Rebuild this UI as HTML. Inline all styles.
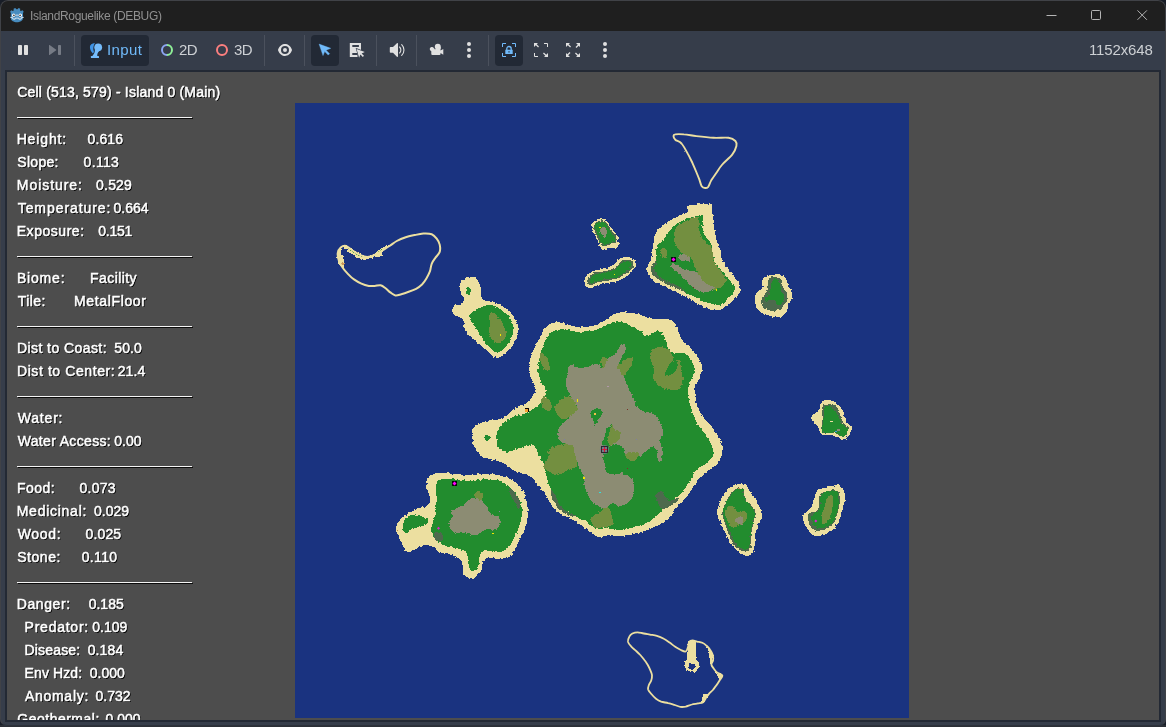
<!DOCTYPE html>
<html><head><meta charset="utf-8"><title>IslandRoguelike (DEBUG)</title>
<style>
*{box-sizing:border-box;margin:0;padding:0}
html,body{width:1166px;height:727px;overflow:hidden;background:#181d27;font-family:"Liberation Sans",sans-serif}
#win{position:absolute;left:0;top:0;width:1166px;height:726px;background:#363d4a;border-radius:8px 8px 7px 7px;overflow:hidden}
#win:after{content:"";box-sizing:border-box;position:absolute;left:0;top:0;width:1166px;height:726px;border:1px solid #404247;border-bottom-color:#2c313a;border-radius:8px 8px 7px 7px;pointer-events:none}
#title{position:absolute;left:0;top:0;width:1166px;height:31px;background:#1f1f1f}
#title .t{position:absolute;left:30.1px;top:9px;font-size:12px;line-height:15px;color:#909090;white-space:nowrap;letter-spacing:-0.34px;will-change:transform}
#tb{position:absolute;left:0;top:31px;width:1166px;height:40px;background:#363d4a}
.sep{position:absolute;top:35px;width:1px;height:31px;background:#4a505c}
.btn{position:absolute;top:35px;height:31px;background:#252b36;border-radius:4px}
.tx{position:absolute;top:41px;font-size:15px;line-height:18px;color:#cdd0d4;white-space:nowrap;will-change:transform}
svg{position:absolute;overflow:visible}
#frame{position:absolute;left:5px;top:70px;width:1156px;height:652px;background:#232934}
#game{position:absolute;left:7px;top:72px;width:1152px;height:648px;background:#4d4d4d;overflow:hidden}
#map{position:absolute;left:288px;top:31px;width:614px;height:615px;background:#1a3380;overflow:hidden}
.l{position:absolute;height:20px;font-size:14px;line-height:20px;color:#fff;white-space:pre;text-shadow:1px 1px 0 #000;-webkit-text-stroke:0.5px #fff}
#panel{position:absolute;left:0;top:0;width:280px;height:648px;will-change:transform}
.hr{position:absolute;left:10px;width:175px;height:1px;background:#f4f4f4;box-shadow:1px 1px 0 rgba(0,0,0,.85)}
</style></head><body>
<div id="bot" style="position:absolute;left:0;top:725px;width:1166px;height:2px;background:#2b2f36"></div>
<div id="win">
<div id="title"><span class="t">IslandRoguelike (DEBUG)</span>
<!--TITLEICONS-->
<svg style="left:0;top:0" width="1166" height="31" viewBox="0 0 1166 31">
<!-- godot icon -->
<g>
<path d="M15.200 8.100l1.300 1.100h.9l1.300-1.100 1.500.7-.1 1.600.8.600 1.600-.7 1.200 1.400-.7 1.300v5.200c0 2.400-3.200 4-6.100 4s-6.100-1.600-6.100-4V13l-.7-1.300 1.200-1.400 1.600.7.800-.6-.1-1.600z" fill="#478cbf"/>
<circle cx="13.700" cy="15.200" r="1.700" fill="#fff"/><circle cx="20.300" cy="15.200" r="1.700" fill="#fff"/>
<circle cx="13.900" cy="15.300" r="0.900" fill="#414042"/><circle cx="20.100" cy="15.300" r="0.900" fill="#414042"/>
<rect x="16.400" y="14.200" width="1.200" height="2.200" rx="0.600" fill="#dfe9f2"/>
<path d="M10.300 17.400h2.300l.2 1.600 2.300.2.100-1.100h3.600l.1 1.100 2.300-.2.200-1.600h2.300" fill="none" stroke="#e6eef5" stroke-width="0.900"/>
</g>
<!-- window buttons -->
<g stroke="#b5b5b5" stroke-width="1" fill="none">
<path d="M1046.500 15.500h10"/>
<rect x="1091.500" y="10.500" width="9" height="9" rx="1"/>
<path d="M1137.500 10.400l9.400 9.400M1146.900 10.400l-9.400 9.400"/>
</g>
</svg>
<!--/TITLEICONS-->
</div>
<div id="tb"></div>
<!--TOOLBAR-->
<svg style="left:0;top:0" width="1166" height="72" viewBox="0 0 1166 72">
<!-- pressed buttons -->
<rect x="81" y="35" width="68" height="31" rx="4" fill="#222935"/>
<rect x="311" y="35" width="28" height="31" rx="4" fill="#222935"/>
<rect x="495" y="35" width="28" height="31" rx="4" fill="#222935"/>
<!-- separators -->
<g fill="#4b515d"><rect x="74" y="35" width="1" height="31"/><rect x="264" y="35" width="1" height="31"/><rect x="304" y="35" width="1" height="31"/><rect x="376" y="35" width="1" height="31"/><rect x="416" y="35" width="1" height="31"/><rect x="488" y="35" width="1" height="31"/></g>
<!-- pause -->
<g fill="#e0e0e0"><rect x="18" y="45" width="4" height="10" rx="0.8"/><rect x="24" y="45" width="4" height="10" rx="0.8"/></g>
<!-- next frame (disabled) -->
<g fill="#767b85"><path d="M49 45.3v9.4a.4.4 0 0 0 .65.3l6.6-4.7a.4.4 0 0 0 0-.6l-6.6-4.7a.4.4 0 0 0-.65.3z"/><rect x="58" y="45" width="3" height="10" rx="0.7"/></g>
<!-- input icon -->
<path d="M94.900 42.900C92 43.300 89.900 44.800 89.900 47c0 2.300 1.200 4.700 3 6.500.7-.6 1-1.400 1-2.300-.5-.8-.7-1.700-.6-2.700.1-2.200.7-4 1.600-5.600z" fill="#3f94e6"/>
<circle cx="98.200" cy="47.300" r="3.900" fill="#75bcfb"/>
<path d="M94.800 49.500c.2 1.700-.2 3.200-.9 4.300-.5.800-1.100 1.600-1.800 2.400h5.200c-.2-2 .3-3.700 1.900-5.200z" fill="#75bcfb"/>
<rect x="90.900" y="56.100" width="8.100" height="1.900" rx="0.500" fill="#75bcfb"/>
<!-- 2D ring -->
<path d="M167 45a5 5 0 0 0 0 10" fill="none" stroke="#8da5f3" stroke-width="2"/>
<path d="M167 45a5 5 0 0 1 0 10" fill="none" stroke="#8eef97" stroke-width="2"/>
<!-- 3D ring -->
<circle cx="222" cy="50" r="5" fill="none" stroke="#fc7f7f" stroke-width="2"/>
<!-- eye -->
<path transform="translate(277 42)" fill="#e0e0e0" fill-rule="evenodd" d="M8 2C5.443 2 2.209 3.948 1.045 7.705a1 1 0 0 0 0 .55C2.163 12.110 5.500 14 8 14s5.836-1.890 6.955-5.705a1 1 0 0 0 0-.55C13.861 3.935 10.554 2 8 2zm0 2a4 4 0 0 1 0 8 4 4 0 0 1 0-8zm0 2a2 2 0 0 0 0 4 2 2 0 0 0 0-4z"/>
<!-- select arrow -->
<path d="M319.100 44.100l11.600 4.200-4.600 1.900 3.500 3.500-1.400 1.400-3.500-3.500-1.700 4z" fill="#70bafa" stroke="#70bafa" stroke-width="0.400" stroke-linejoin="round"/>
<!-- list select -->
<path d="M349.800 43h11.200v7.500h-3.500v6.500h-7.700z" fill="#e0e0e0"/>
<rect x="352.300" y="45" width="6.600" height="2" fill="#363d4a"/><rect x="352.300" y="53" width="5" height="2" fill="#363d4a"/>
<path d="M356.600 48.900l8.200 3.200-3.200 1.300 2.400 2.400-1.200 1.200-2.400-2.400-1.300 3.200z" fill="#e0e0e0" stroke="#363d4a" stroke-width="1.200" paint-order="stroke"/>
<!-- speaker -->
<g fill="#e0e0e0"><path d="M397.400 43c.4 0 .6.300.6.700v12.600c0 .6-.6.900-1.100.5l-3.900-4H390.600a.8.800 0 0 1-.8-.8v-4.200a.8.800 0 0 1 .8-.8H393l3.900-3.800c.2-.2.300-.2.500-.2z"/></g>
<path d="M399.600 47a4.200 4.200 0 0 1 0 6M401.700 44.600a7.600 7.600 0 0 1 0 10.800" fill="none" stroke="#e0e0e0" stroke-width="1.100" stroke-linecap="round"/>
<!-- camera -->
<path transform="translate(428 42)" fill="#e0e0e0" d="M9.800 1.800a3 3 0 0 0-3 3 3 3 0 0 0 .9 2.100 2.200 2.200 0 0 0-.8.700 2.200 2.200 0 0 0-1-1.400 2.200 2.200 0 0 0-4.200 .9 2.200 2.200 0 0 0 1.600 2.100V12a1 1 0 0 0 1 1h7.200a1 1 0 0 0 1-1v-.9l2.800 1.600V7l-2.800 1.600V7.400a3 3 0 0 0 .3-2.600 3 3 0 0 0-3-3z"/>
<!-- dots -->
<g fill="#e0e0e0"><circle cx="469" cy="44" r="2"/><circle cx="469" cy="50" r="2"/><circle cx="469" cy="56" r="2"/><circle cx="605" cy="44" r="2"/><circle cx="605" cy="50" r="2"/><circle cx="605" cy="56" r="2"/></g>
<!-- lock frame -->
<g fill="none" stroke="#70bafa" stroke-width="1"><path d="M502.500 47v-3.500h3.500M512 43.500h3.500v3.500M515.500 53v3.500h-3.500M506 56.500h-3.500v-3.500"/></g>
<path d="M506.800 50v-1.300a2.200 2.200 0 0 1 4.400 0v1.300" fill="none" stroke="#70bafa" stroke-width="1.300"/>
<path fill-rule="evenodd" d="M505.300 49.800h7.400v4.200h-7.400zM508.400 51.200v1.400h1.200v-1.400z" fill="#70bafa"/>
<!-- expand 1 -->
<g fill="#e0e0e0"><path d="M534 43h4l-1.300 1.300 2.300 2.300-.9.900-2.300-2.300-1.800 1.800z"/><path d="M548 57h-4l1.300-1.300-2.300-2.300.9-.9 2.300 2.300 1.800-1.800z"/></g>
<g fill="none" stroke="#e0e0e0" stroke-width="1"><path d="M544 43.500h3.500v3.500M534.500 53v3.500h3.500"/></g>
<!-- expand 2 -->
<g fill="#e0e0e0"><path d="M566 43h4l-1.300 1.300 2.300 2.300-.9.900-2.300-2.300-1.800 1.800z"/><path d="M580 57h-4l1.300-1.300-2.300-2.300.9-.9 2.300 2.300 1.800-1.800z"/><path d="M580 43v4l-1.300-1.300-2.300 2.300-.9-.9 2.300-2.300-1.800-1.800z"/><path d="M566 57v-4l1.300 1.300 2.300-2.300.9.900-2.300 2.300 1.800 1.800z"/></g>
</svg>
<div class="tx" style="left:106.700px;color:#70bafa;letter-spacing:0.4px" id="tInput">Input</div>
<div class="tx" style="left:178.500px;letter-spacing:-0.500px" id="t2d">2D</div>
<div class="tx" style="left:233.500px;letter-spacing:-0.500px" id="t3d">3D</div>
<div class="tx" style="left:1088.500px;letter-spacing:-0.150px" id="tres">1152x648</div>
<!--/TOOLBAR-->
<div id="frame"></div>
<div id="game">
<div id="map">
<!--MAP-->
<svg style="left:0;top:0" width="614" height="615" viewBox="295 103 614 615">
<defs><filter id="rg" x="-5%" y="-5%" width="110%" height="110%"><feTurbulence type="fractalNoise" baseFrequency="0.35" numOctaves="2" seed="7" result="n"/><feDisplacementMap in="SourceGraphic" in2="n" scale="3.2" xChannelSelector="R" yChannelSelector="G"/></filter><filter id="rg2" x="-5%" y="-5%" width="110%" height="110%"><feTurbulence type="fractalNoise" baseFrequency="0.3" numOctaves="1" seed="3" result="n"/><feDisplacementMap in="SourceGraphic" in2="n" scale="1.5" xChannelSelector="R" yChannelSelector="G"/></filter></defs>
<g filter="url(#rg)" shape-rendering="crispEdges">
<path d="M546.0 327.2C549.3 324.3 554.4 322.2 558.7 322.0C563.0 321.8 567.3 324.9 571.8 325.8C576.3 326.7 581.5 327.3 585.6 327.2C589.6 327.0 592.4 326.0 595.9 324.8C599.3 323.5 602.6 321.6 606.2 319.6C609.7 317.6 611.9 313.7 617.2 312.7C622.5 311.8 632.1 312.7 637.8 313.8C643.6 314.8 646.7 318.1 651.6 318.9C656.5 319.8 663.1 318.1 667.1 318.9C671.1 319.8 673.4 320.9 675.7 324.1C678.0 327.2 678.3 333.8 680.8 337.8C683.4 341.9 688.0 344.4 691.2 348.2C694.3 351.9 697.9 356.5 699.8 360.2C701.6 363.9 702.8 367.1 702.5 370.5C702.2 374.0 699.4 377.4 698.0 380.8C696.7 384.3 694.6 386.6 694.6 391.2C694.6 395.7 696.1 403.5 698.0 408.4C699.9 413.2 703.7 417.4 705.9 420.4C708.2 423.4 709.2 423.0 711.8 426.6C714.4 430.2 719.7 437.8 721.4 442.1C723.1 446.4 722.9 448.7 722.1 452.4C721.4 456.1 719.8 461.0 717.0 464.4C714.1 467.9 708.4 469.9 704.9 473.0C701.5 476.2 699.2 479.6 696.3 483.3C693.4 487.1 690.9 491.7 687.7 495.4C684.6 499.1 680.3 502.3 677.4 505.7C674.5 509.1 672.8 513.2 670.5 516.0C668.2 518.9 666.8 520.9 663.6 522.9C660.5 524.9 655.9 526.3 651.6 528.1C647.3 529.8 643.0 531.9 637.8 533.2C632.7 534.5 625.3 535.7 620.6 536.0C615.9 536.3 613.2 534.7 609.6 534.9C606.1 535.2 602.5 537.7 599.3 537.3C596.2 536.9 594.7 535.2 590.7 532.5C586.7 529.8 580.1 524.2 575.2 521.2C570.4 518.1 565.2 516.6 561.5 514.3C557.7 512.0 555.5 510.6 552.9 507.4C550.3 504.3 548.3 498.8 546.0 495.4C543.7 491.9 541.7 489.9 539.1 486.8C536.5 483.6 534.5 479.0 530.5 476.5C526.5 473.9 519.6 473.6 515.0 471.3C510.5 469.0 507.0 464.7 503.0 462.7C499.0 460.7 494.7 460.4 491.0 459.3C487.2 458.1 483.5 458.1 480.6 455.8C477.8 453.5 475.2 449.4 473.8 445.5C472.3 441.6 471.7 435.5 471.7 432.4C471.7 429.4 472.6 428.7 473.8 427.3C474.9 425.8 476.0 425.0 478.6 423.8C481.2 422.7 485.5 421.3 489.2 420.4C493.0 419.5 496.7 420.4 501.3 418.3C505.9 416.3 512.2 410.9 516.8 408.0C521.3 405.1 525.6 404.3 528.8 401.1C531.9 398.0 535.4 393.1 535.7 389.1C536.0 385.1 531.7 381.1 530.5 377.1C529.4 373.0 528.5 369.0 528.8 365.0C529.1 361.0 530.5 357.3 532.2 353.0C534.0 348.7 536.8 343.5 539.1 339.2C541.4 334.9 542.7 330.0 546.0 327.2Z" fill="#ecdfa0"/>
<path d="M551.2 332.3C554.0 330.0 557.5 329.0 561.5 328.9C565.5 328.8 570.1 331.4 575.2 331.6C580.4 331.9 587.8 331.4 592.4 330.6C597.0 329.9 598.6 328.7 602.8 327.2C606.9 325.6 611.9 321.3 617.2 321.3C622.5 321.4 629.5 325.2 634.4 327.5C639.3 329.8 642.4 334.5 646.4 335.1C650.5 335.7 655.3 330.2 658.5 331.0C661.6 331.7 663.3 336.1 665.4 339.6C667.4 343.0 667.4 349.3 670.5 351.6C673.7 353.9 680.5 351.3 684.3 353.3C688.0 355.3 691.2 360.5 692.9 363.6C694.6 366.8 695.0 369.4 694.6 372.2C694.2 375.1 691.6 377.7 690.5 380.8C689.3 384.0 687.6 386.6 687.7 391.2C687.8 395.7 689.5 402.9 691.2 408.4C692.8 413.8 695.5 420.1 697.3 423.8C699.2 427.6 700.7 428.2 702.5 430.7C704.3 433.2 706.5 434.7 708.4 438.6C710.2 442.5 714.1 449.8 713.5 454.1C712.9 458.4 707.8 461.8 704.9 464.4C702.0 467.0 698.9 466.7 696.3 469.6C693.7 472.4 692.0 477.6 689.4 481.6C686.9 485.6 684.3 489.9 680.8 493.7C677.4 497.4 672.2 500.8 668.8 504.0C665.4 507.1 663.3 509.7 660.2 512.6C657.0 515.4 653.6 518.9 649.9 521.2C646.2 523.5 642.7 524.9 637.8 526.3C633.0 527.8 625.6 529.4 620.6 529.8C615.7 530.1 612.0 528.7 607.9 528.4C603.8 528.1 599.6 529.3 595.9 528.1C592.1 526.9 589.6 523.5 585.6 521.2C581.5 518.9 575.8 516.6 571.8 514.3C567.8 512.0 564.3 510.3 561.5 507.4C558.6 504.6 556.6 500.5 554.6 497.1C552.6 493.7 550.9 490.5 549.4 486.8C548.0 483.1 546.9 478.5 546.0 474.7C545.1 471.0 545.4 467.6 544.3 464.4C543.1 461.3 540.8 459.0 539.1 455.8C537.4 452.7 536.8 446.9 534.0 445.5C531.1 444.1 526.2 446.2 521.9 447.2C517.6 448.3 511.9 451.4 508.2 451.7C504.4 452.0 501.4 450.5 499.6 448.9C497.7 447.3 497.1 445.2 496.8 442.1C496.5 438.9 495.7 434.0 497.8 430.0C500.0 426.1 505.3 421.1 509.9 418.3C514.5 415.5 520.5 415.5 525.4 413.2C530.2 410.9 535.7 408.0 539.1 404.6C542.6 401.1 545.7 396.5 546.0 392.5C546.3 388.5 542.2 384.2 540.8 380.5C539.5 376.8 538.3 374.2 538.1 370.2C537.9 366.2 538.8 361.0 539.8 356.4C540.8 351.8 542.4 346.7 544.3 342.7C546.2 338.6 548.3 334.6 551.2 332.3Z" fill="#238c2e"/>
<path d="M484.1 436.9C484.5 436.2 486.4 435.1 487.5 435.2C488.7 435.3 490.8 436.7 491.0 437.6C491.1 438.5 489.2 440.0 488.2 440.3C487.2 440.7 485.5 440.2 484.8 439.7C484.1 439.1 483.6 437.6 484.1 436.9Z" fill="#238c2e"/>
<path d="M551.2 490.2C551.4 489.4 553.0 491.1 554.6 493.7C556.1 496.2 558.1 502.5 560.4 505.7C562.7 508.9 565.6 510.9 568.4 512.6C571.1 514.3 577.0 515.6 577.0 516.0C577.0 516.5 571.4 516.5 568.4 515.3C565.3 514.2 561.3 511.9 558.7 509.1C556.1 506.4 554.1 502.0 552.9 498.8C551.6 495.7 550.9 491.1 551.2 490.2Z" fill="#4d6b4d"/>
<path d="M649.9 355.0C650.5 352.7 652.5 349.3 655.0 348.2C657.6 347.0 662.5 347.0 665.4 348.2C668.2 349.3 670.8 352.7 672.2 355.0C673.7 357.3 672.8 361.1 674.0 361.9C675.1 362.8 677.7 357.6 679.1 360.2C680.5 362.8 682.3 372.8 682.6 377.4C682.8 382.0 682.6 385.6 680.8 387.7C679.1 389.8 675.4 390.1 672.2 390.1C669.1 390.1 665.1 389.5 661.9 387.7C658.8 385.9 654.6 382.3 653.3 379.1C652.1 376.0 654.6 371.7 654.3 368.8C654.1 365.9 652.3 364.2 651.6 361.9C650.9 359.6 649.3 357.3 649.9 355.0Z" fill="#738f40"/>
<path d="M665.4 375.7C664.8 374.2 667.1 367.9 668.8 365.4C670.5 362.8 674.2 359.9 675.7 360.2C677.1 360.5 678.0 364.8 677.4 367.1C676.8 369.4 674.2 372.5 672.2 374.0C670.2 375.4 665.9 377.1 665.4 375.7Z" fill="#238c2e"/>
<path d="M549.4 448.9C551.6 446.8 557.7 445.7 561.5 444.8C565.2 444.0 569.5 441.9 571.8 443.8C574.1 445.6 574.4 452.1 575.2 455.8C576.1 459.5 578.1 463.8 577.0 466.1C575.8 468.4 571.5 468.1 568.4 469.6C565.2 471.0 561.8 474.7 558.0 474.7C554.3 474.7 548.3 471.3 546.0 469.6C543.7 467.9 543.9 466.4 544.3 464.4C544.7 462.4 547.5 460.1 548.4 457.5C549.3 455.0 547.3 451.1 549.4 448.9Z" fill="#738f40"/>
<path d="M590.7 517.7C591.9 515.7 596.4 514.3 599.3 512.6C602.2 510.9 605.6 506.0 607.9 507.4C610.2 508.9 612.8 518.0 613.1 521.2C613.4 524.3 612.2 525.2 609.6 526.3C607.1 527.5 600.5 528.3 597.6 528.1C594.7 527.8 593.6 526.3 592.4 524.6C591.3 522.9 589.6 519.7 590.7 517.7Z" fill="#738f40"/>
<path d="M655.0 495.4C655.6 493.3 660.2 491.0 661.9 491.3C663.6 491.5 663.9 495.6 665.4 497.1C666.8 498.6 668.2 500.5 670.5 500.5C672.8 500.5 678.3 496.8 679.1 497.1C680.0 497.4 678.3 500.3 675.7 502.3C673.1 504.3 666.5 508.9 663.6 509.1C660.8 509.4 659.9 506.3 658.5 504.0C657.0 501.7 654.5 497.5 655.0 495.4Z" fill="#4d6b4d"/>
<path d="M568.5 367.2C569.3 365.6 570.4 364.5 572.2 364.7C574.1 364.9 576.8 368.2 579.6 368.5C582.5 368.7 586.5 366.8 589.6 366.0C592.7 365.1 596.2 363.3 598.2 363.5C600.3 363.7 600.5 368.0 601.9 367.2C603.4 366.4 604.8 360.6 606.9 358.5C609.0 356.5 612.3 356.7 614.3 354.8C616.4 353.0 617.6 349.2 619.3 347.4C620.9 345.5 623.2 343.3 624.2 343.7C625.3 344.1 625.9 347.8 625.5 349.9C625.1 351.9 622.8 354.0 621.8 356.1C620.7 358.1 619.5 360.0 619.3 362.3C619.1 364.5 619.7 367.2 620.5 369.7C621.4 372.2 623.2 374.6 624.2 377.1C625.3 379.6 625.7 382.1 626.7 384.6C627.8 387.0 629.2 389.5 630.4 392.0C631.7 394.5 633.1 396.9 634.2 399.4C635.2 401.9 635.0 404.8 636.6 406.9C638.3 408.9 641.6 410.8 644.1 411.8C646.5 412.8 649.4 412.2 651.5 413.1C653.6 413.9 654.8 414.9 656.5 416.8C658.1 418.6 660.4 421.3 661.4 424.2C662.4 427.1 662.9 431.2 662.7 434.1C662.4 437.0 660.2 438.7 660.2 441.5C660.2 444.4 662.4 448.2 662.7 451.5C662.9 454.8 662.2 460.1 661.4 461.4C660.6 462.6 658.5 460.8 657.7 458.9C656.9 457.0 657.5 452.3 656.5 450.2C655.4 448.2 653.2 446.3 651.5 446.5C649.9 446.7 648.6 449.8 646.5 451.5C644.5 453.1 641.6 455.2 639.1 456.4C636.6 457.7 634.0 459.3 631.7 458.9C629.4 458.5 627.1 456.0 625.5 453.9C623.8 451.9 623.6 448.2 621.8 446.5C619.9 444.9 616.4 444.0 614.3 444.0C612.3 444.0 610.4 447.3 609.4 446.5C608.3 445.7 608.1 441.5 608.1 439.1C608.1 436.6 608.8 434.1 609.4 431.6C610.0 429.2 612.3 424.6 611.9 424.2C611.4 423.8 608.1 427.1 606.9 429.2C605.7 431.2 605.3 434.1 604.4 436.6C603.6 439.1 601.5 441.8 601.9 444.0C602.4 446.3 606.7 448.6 606.9 450.2C607.1 451.9 603.6 451.7 603.2 453.9C602.8 456.2 603.8 460.8 604.4 463.8C605.0 466.9 605.3 470.9 606.9 472.5C608.6 474.2 611.4 473.6 614.3 473.8C617.2 474.0 621.4 472.9 624.2 473.8C627.1 474.6 630.0 476.7 631.7 478.7C633.3 480.8 634.0 483.3 634.2 486.2C634.4 489.0 634.2 493.2 632.9 496.1C631.7 499.0 629.0 501.8 626.7 503.5C624.5 505.1 621.8 506.0 619.3 506.0C616.8 506.0 614.3 503.1 611.9 503.5C609.4 503.9 606.7 508.0 604.4 508.5C602.2 508.9 600.1 506.8 598.2 506.0C596.4 505.1 594.9 505.1 593.3 503.5C591.6 501.8 589.8 499.0 588.3 496.1C586.9 493.2 585.4 489.5 584.6 486.2C583.8 482.8 584.2 479.1 583.4 476.2C582.5 473.3 580.7 471.3 579.6 468.8C578.6 466.3 578.0 463.8 577.2 461.4C576.3 458.9 575.3 456.4 574.7 453.9C574.1 451.5 574.7 448.2 573.5 446.5C572.2 444.9 569.5 444.9 567.3 444.0C565.0 443.2 561.5 443.2 559.8 441.5C558.2 439.9 557.3 436.6 557.3 434.1C557.3 431.6 558.6 428.7 559.8 426.7C561.1 424.6 563.1 423.4 564.8 421.7C566.4 420.1 567.7 418.8 569.7 416.8C571.8 414.7 576.3 411.8 577.2 409.3C578.0 406.9 575.7 404.0 574.7 401.9C573.7 399.8 572.2 399.0 571.0 396.9C569.7 394.9 568.1 392.0 567.3 389.5C566.4 387.0 566.0 384.6 566.0 382.1C566.0 379.6 566.8 377.1 567.3 374.6C567.7 372.2 567.7 368.9 568.5 367.2Z" fill="#8c8c73"/>
<path d="M616.8 367.2C617.8 365.6 622.8 361.4 625.5 359.8C628.2 358.1 631.9 356.5 632.9 357.3C634.0 358.1 632.7 362.3 631.7 364.7C630.6 367.2 628.2 370.3 626.7 372.2C625.3 374.0 624.2 376.3 623.0 375.9C621.8 375.5 620.3 371.1 619.3 369.7C618.3 368.2 615.8 368.9 616.8 367.2Z" fill="#738f40"/>
<path d="M601.9 357.3C602.8 355.9 606.5 356.9 606.9 358.5C607.3 360.2 605.3 365.8 604.4 367.2C603.6 368.7 602.4 368.9 601.9 367.2C601.5 365.6 601.1 358.7 601.9 357.3Z" fill="#738f40"/>
<path d="M554.9 406.9C556.1 404.0 562.1 398.6 564.8 396.9C567.5 395.3 568.9 394.9 571.0 396.9C573.0 399.0 577.4 406.0 577.2 409.3C577.0 412.6 572.2 415.1 569.7 416.8C567.3 418.4 564.4 419.7 562.3 419.2C560.2 418.8 558.6 416.4 557.3 414.3C556.1 412.2 553.6 409.7 554.9 406.9Z" fill="#738f40"/>
<path d="M542.0 398.2C542.6 396.9 544.1 396.5 545.5 396.9C546.8 397.4 548.8 399.0 549.9 400.7C551.0 402.3 552.0 405.2 551.9 406.9C551.8 408.5 550.7 410.2 549.4 410.6C548.2 411.0 545.8 410.4 544.5 409.3C543.1 408.3 541.9 406.2 541.5 404.4C541.1 402.5 541.3 399.4 542.0 398.2Z" fill="#738f40"/>
<path d="M540.0 353.6C540.6 351.9 543.5 353.4 545.0 354.8C546.4 356.3 547.8 359.8 548.7 362.3C549.5 364.7 550.3 368.2 549.9 369.7C549.5 371.1 547.6 371.8 546.2 370.9C544.7 370.1 542.3 367.6 541.2 364.7C540.2 361.8 539.4 355.2 540.0 353.6Z" fill="#738f40"/>
<path d="M611.9 424.2C612.7 423.8 612.9 427.7 614.3 429.2C615.8 430.6 619.7 431.2 620.5 432.9C621.4 434.5 620.5 437.2 619.3 439.1C618.1 440.9 614.7 442.8 613.1 444.0C611.4 445.3 610.2 447.3 609.4 446.5C608.6 445.7 608.1 441.5 608.1 439.1C608.1 436.6 608.8 434.1 609.4 431.6C610.0 429.2 611.0 424.6 611.9 424.2Z" fill="#738f40"/>
<path d="M625.5 453.9C626.3 452.9 629.4 451.5 631.7 451.5C634.0 451.5 638.5 452.7 639.1 453.9C639.7 455.2 636.6 457.7 635.4 458.9C634.2 460.1 633.1 461.6 631.7 461.4C630.2 461.2 627.8 458.9 626.7 457.7C625.7 456.4 624.7 455.0 625.5 453.9Z" fill="#738f40"/>
<path d="M590.8 411.8C591.8 410.4 595.1 408.3 597.0 408.1C598.8 407.9 601.3 409.1 601.9 410.6C602.6 412.0 601.5 415.1 600.7 416.8C599.9 418.4 597.8 418.8 597.0 420.5C596.2 422.1 596.4 426.7 595.8 426.7C595.1 426.7 594.1 422.1 593.3 420.5C592.4 418.8 591.2 418.2 590.8 416.8C590.4 415.3 589.8 413.3 590.8 411.8Z" fill="#238c2e"/>
<path d="M687.7 206.1C689.1 204.8 693.1 204.9 696.0 204.6C698.8 204.2 702.3 204.1 704.8 204.0C707.4 203.9 710.1 202.7 711.3 204.0C712.6 205.3 711.8 208.9 712.2 212.0C712.6 215.0 713.2 218.6 713.7 222.3C714.2 226.0 714.4 230.4 715.2 234.1C715.9 237.8 717.1 241.5 718.1 244.5C719.1 247.4 720.4 249.2 721.1 251.9C721.7 254.6 721.0 258.0 722.0 260.7C723.0 263.4 724.9 265.4 727.0 268.1C729.1 270.8 732.2 273.8 734.4 277.0C736.6 280.2 739.8 284.1 740.3 287.3C740.8 290.5 739.1 293.5 737.3 296.2C735.6 298.9 732.4 301.5 730.0 303.6C727.5 305.7 725.0 307.5 722.6 308.6C720.1 309.8 717.6 310.4 715.2 310.4C712.7 310.4 710.2 309.5 707.8 308.6C705.3 307.7 703.1 306.6 700.4 305.1C697.7 303.6 694.5 301.4 691.5 299.8C688.6 298.1 685.5 296.8 682.7 295.3C679.8 293.8 677.2 292.2 674.4 290.9C671.5 289.6 668.5 288.7 665.5 287.3C662.6 286.0 659.2 284.5 656.7 282.9C654.1 281.3 652.0 279.5 650.4 277.6C648.9 275.7 647.6 273.3 647.2 271.4C646.7 269.4 647.1 268.0 647.8 265.8C648.5 263.5 650.5 260.6 651.3 257.8C652.1 255.0 652.1 251.9 652.5 248.9C653.0 246.0 653.6 242.3 654.0 240.0C654.3 237.8 653.7 237.6 654.6 235.6C655.4 233.6 657.3 230.2 659.0 228.2C660.7 226.3 662.7 225.3 664.9 223.8C667.1 222.3 669.6 220.8 672.3 219.4C675.0 217.9 678.6 216.2 681.2 214.9C683.7 213.7 686.6 213.4 687.7 212.0C688.8 210.5 686.3 207.3 687.7 206.1Z" fill="#ecdfa0"/>
<path d="M698.9 215.8C701.6 215.4 702.8 214.3 703.3 216.4C703.9 218.5 702.0 224.8 702.5 228.2C703.0 231.7 704.7 234.1 706.3 237.1C707.9 240.0 711.0 242.5 712.2 246.0C713.4 249.4 712.7 254.3 713.7 257.8C714.7 261.2 716.2 263.7 718.1 266.7C720.1 269.6 722.8 272.3 725.5 275.5C728.2 278.7 733.2 282.9 734.4 285.9C735.6 288.8 734.4 290.8 732.9 293.3C731.4 295.7 727.7 298.7 725.5 300.6C723.3 302.6 722.1 304.6 719.6 305.1C717.1 305.6 713.1 304.0 710.7 303.6C708.4 303.2 708.3 303.5 705.7 302.4C703.1 301.3 698.5 298.7 695.1 297.1C691.7 295.5 688.2 294.0 685.3 292.7C682.5 291.3 680.5 290.3 677.9 289.1C675.4 287.9 672.8 286.9 670.0 285.6C667.1 284.2 663.4 282.5 661.1 281.1C658.7 279.8 657.3 279.1 655.8 277.6C654.2 276.1 652.4 274.1 651.6 272.3C650.9 270.4 650.6 268.6 651.3 266.7C652.1 264.7 655.3 262.7 656.1 260.4C656.8 258.2 655.8 255.9 656.1 253.3C656.3 250.8 656.3 247.6 657.5 245.4C658.8 243.2 661.5 242.4 663.4 240.0C665.4 237.7 667.1 233.9 669.4 231.2C671.6 228.5 673.8 225.9 676.7 223.8C679.7 221.7 683.4 220.1 687.1 218.8C690.8 217.4 696.2 216.2 698.9 215.8Z" fill="#238c2e"/>
<path d="M678.2 225.3C680.8 223.3 686.7 220.7 690.0 219.4C693.4 218.0 696.8 215.5 698.3 217.0C699.8 218.5 698.3 224.9 698.9 228.2C699.5 231.6 700.6 234.9 701.9 237.1C703.1 239.3 704.6 239.6 706.3 241.5C708.0 243.5 711.0 246.0 712.2 248.9C713.4 251.9 712.7 256.1 713.7 259.3C714.7 262.5 716.4 265.4 718.1 268.1C719.9 270.8 722.8 273.3 724.0 275.5C725.3 277.7 726.0 279.5 725.5 281.4C725.0 283.4 723.1 285.9 721.1 287.3C719.1 288.8 716.4 290.8 713.7 290.3C711.0 289.8 707.3 286.8 704.8 284.4C702.4 281.9 700.6 278.5 698.9 275.5C697.2 272.6 695.7 269.6 694.5 266.7C693.3 263.7 693.3 259.8 691.5 257.8C689.8 255.8 686.4 256.3 684.1 254.8C681.9 253.3 680.0 251.4 678.2 248.9C676.5 246.5 674.4 243.0 673.8 240.0C673.2 237.1 673.9 233.6 674.7 231.2C675.4 228.7 675.7 227.2 678.2 225.3Z" fill="#738f40"/>
<path d="M670.8 263.7C671.6 263.2 674.5 264.2 676.7 265.2C679.0 266.2 681.4 268.6 684.1 269.6C686.8 270.6 690.5 270.3 693.0 271.1C695.5 271.8 697.4 272.6 698.9 274.0C700.4 275.5 700.4 278.2 701.9 280.0C703.3 281.7 705.8 283.2 707.8 284.4C709.8 285.6 713.0 286.3 713.7 287.3C714.4 288.4 713.7 290.1 712.2 290.9C710.7 291.6 707.5 291.9 704.8 291.8C702.1 291.7 698.4 291.5 696.0 290.3C693.5 289.1 692.0 286.4 690.0 284.4C688.1 282.4 686.1 280.4 684.1 278.5C682.2 276.5 680.2 274.3 678.2 272.6C676.3 270.8 673.5 269.6 672.3 268.1C671.1 266.7 670.1 264.2 670.8 263.7Z" fill="#8c8c73"/>
<path d="M678.2 256.3C678.7 255.3 682.2 254.7 684.1 254.8C686.1 255.0 689.3 256.2 690.0 257.2C690.8 258.2 690.0 260.1 688.6 260.7C687.1 261.3 682.9 261.5 681.2 260.7C679.5 260.0 677.7 257.3 678.2 256.3Z" fill="#8c8c73"/>
<path d="M660.5 250.4C660.8 248.8 663.0 247.2 664.0 247.4C665.1 247.7 666.7 250.1 667.0 251.9C667.3 253.6 666.7 256.9 665.8 257.8C665.0 258.7 662.9 258.4 662.0 257.2C661.1 256.0 660.1 252.0 660.5 250.4Z" fill="#738f40"/>
<path d="M656.1 259.9C655.2 260.7 652.1 264.6 651.3 266.7C650.6 268.7 650.9 270.4 651.6 272.3C652.4 274.1 654.2 276.1 655.8 277.6C657.3 279.1 658.7 279.8 661.1 281.1C663.4 282.5 667.1 284.2 670.0 285.6C672.8 286.9 675.4 287.9 677.9 289.1C680.5 290.3 684.2 292.4 685.3 292.7C686.4 292.9 685.5 291.6 684.4 290.6C683.3 289.6 681.1 287.7 678.8 286.5C676.6 285.2 673.5 284.1 670.8 282.9C668.2 281.7 665.2 280.5 662.9 279.1C660.5 277.6 658.4 275.8 656.9 274.0C655.5 272.3 654.3 270.8 654.3 268.7C654.2 266.7 656.4 263.1 656.7 261.6C656.9 260.1 656.9 259.0 656.1 259.9Z" fill="#4d6b4d"/>
<path d="M591.3 226.5C591.4 224.6 592.5 222.5 594.3 221.1C596.1 219.8 600.0 218.4 602.0 218.2C604.0 218.0 604.9 218.4 606.4 220.0C607.9 221.5 609.7 225.4 611.1 227.6C612.6 229.9 614.1 231.5 615.3 233.3C616.5 235.0 617.8 235.6 618.2 238.0C618.6 240.3 619.0 245.8 617.6 247.4C616.3 249.1 612.5 247.7 610.0 248.0C607.4 248.3 604.3 249.5 602.6 249.2C600.8 248.9 600.5 247.9 599.6 246.3C598.7 244.6 598.2 241.5 597.2 239.2C596.3 236.8 594.7 234.2 593.7 232.1C592.7 230.0 591.2 228.3 591.3 226.5Z" fill="#ecdfa0"/>
<path d="M593.7 227.6C593.8 226.3 594.7 224.6 596.1 223.5C597.4 222.4 600.3 221.2 602.0 221.1C603.6 221.0 604.5 221.5 605.8 222.9C607.1 224.3 608.6 227.4 610.0 229.4C611.3 231.4 613.1 233.4 614.1 235.0C615.1 236.7 616.0 237.9 615.9 239.2C615.8 240.4 614.9 241.8 613.5 242.7C612.1 243.6 609.3 244.0 607.6 244.5C605.9 245.0 604.4 246.0 603.2 245.7C601.9 245.4 601.0 244.2 600.2 242.7C599.4 241.2 599.2 238.7 598.4 236.8C597.6 234.9 596.3 233.0 595.5 231.5C594.7 230.0 593.6 229.0 593.7 227.6Z" fill="#238c2e" stroke="#4d6b4d" stroke-width="1.4"/>
<path d="M600.2 228.8C600.7 228.0 602.7 226.9 603.7 227.0C604.8 227.1 605.9 228.4 606.4 229.4C606.9 230.4 607.1 232.1 607.0 233.3C606.9 234.4 606.3 235.4 605.8 236.2C605.4 237.0 604.9 238.2 604.3 238.0C603.8 237.8 603.2 236.0 602.6 235.0C601.9 234.0 600.9 233.1 600.5 232.1C600.1 231.0 599.7 229.7 600.2 228.8Z" fill="#8c8c73"/>
<path d="M584.2 281.4C584.2 279.5 585.2 277.2 586.6 275.5C588.0 273.8 590.0 272.2 592.5 271.1C595.0 270.0 598.4 269.8 601.4 269.0C604.3 268.3 607.8 267.8 610.2 266.7C612.7 265.5 614.4 263.6 616.2 262.2C617.9 260.8 618.6 259.2 620.6 258.4C622.6 257.5 625.8 257.0 628.0 257.2C630.2 257.3 632.5 258.2 633.9 259.3C635.3 260.3 636.3 262.0 636.3 263.7C636.3 265.4 635.0 267.9 633.9 269.6C632.8 271.3 631.2 272.6 629.5 274.0C627.7 275.5 625.8 277.2 623.5 278.5C621.3 279.7 618.9 280.7 616.2 281.4C613.4 282.2 610.0 282.4 607.3 282.9C604.6 283.4 602.4 283.6 599.9 284.4C597.4 285.1 594.7 286.8 592.5 287.3C590.3 287.8 588.0 288.3 586.6 287.3C585.2 286.4 584.2 283.4 584.2 281.4Z" fill="#ecdfa0"/>
<path d="M588.1 280.8C588.1 279.5 589.6 277.4 591.0 276.1C592.5 274.8 594.7 273.8 596.9 273.2C599.2 272.5 601.6 272.6 604.3 272.0C607.0 271.4 610.7 270.9 613.2 269.6C615.7 268.3 617.4 265.7 619.1 264.3C620.8 262.9 621.8 261.9 623.5 261.3C625.3 260.7 628.0 260.2 629.5 260.7C630.9 261.2 632.3 262.9 632.4 264.3C632.6 265.7 631.5 267.5 630.3 269.0C629.2 270.5 627.5 271.8 625.6 273.2C623.7 274.5 621.4 276.0 619.1 277.0C616.8 278.0 614.3 278.5 611.7 279.1C609.2 279.6 606.2 279.8 603.7 280.2C601.3 280.7 599.1 281.3 596.9 282.0C594.8 282.7 592.5 284.6 591.0 284.4C589.6 284.2 588.1 282.2 588.1 280.8Z" fill="#238c2e" stroke="#4d6b4d" stroke-width="1.6"/>
<path d="M459.5 285.9C459.7 283.7 461.1 281.5 462.5 280.0C463.8 278.5 465.8 277.6 467.8 277.1C469.8 276.6 472.4 276.3 474.3 277.1C476.2 277.8 477.9 279.5 479.0 281.5C480.1 283.5 480.7 286.4 481.1 288.9C481.4 291.4 480.3 294.3 481.1 296.3C481.8 298.3 483.3 299.7 485.5 300.7C487.7 301.7 491.4 301.2 494.4 302.2C497.3 303.2 500.5 304.9 503.3 306.6C506.0 308.3 508.6 310.3 510.6 312.5C512.7 314.8 514.3 317.2 515.7 319.9C517.0 322.6 518.5 325.8 518.6 328.8C518.8 331.7 517.6 334.7 516.6 337.7C515.5 340.6 513.8 343.9 512.1 346.5C510.4 349.1 508.4 351.5 506.2 353.3C504.0 355.1 501.0 357.0 498.8 357.5C496.6 358.0 494.7 357.3 492.9 356.3C491.1 355.3 489.7 353.2 487.9 351.6C486.1 349.9 484.1 348.3 482.0 346.5C479.9 344.7 477.5 342.6 475.2 340.6C472.8 338.6 469.6 336.9 467.8 334.7C466.0 332.5 465.0 329.8 464.2 327.3C463.5 324.9 464.2 321.7 463.3 319.9C462.5 318.2 460.5 318.0 458.9 317.0C457.3 316.0 454.7 315.3 453.6 314.0C452.5 312.7 452.0 310.5 452.4 309.0C452.8 307.5 454.4 306.0 456.0 305.1C457.5 304.3 460.5 304.7 461.9 303.7C463.3 302.7 464.3 301.0 464.2 299.2C464.1 297.5 462.1 295.5 461.3 293.3C460.5 291.1 459.3 288.2 459.5 285.9Z" fill="#ecdfa0"/>
<path d="M469.3 315.5C469.5 313.5 471.7 312.4 473.7 311.1C475.7 309.7 478.4 308.2 481.1 307.2C483.8 306.2 487.2 305.1 490.0 305.1C492.7 305.1 494.9 306.0 497.3 307.2C499.8 308.4 502.5 310.6 504.7 312.5C506.9 314.5 509.2 316.6 510.6 319.0C512.1 321.5 513.3 324.5 513.6 327.3C513.8 330.2 513.1 333.3 512.1 336.2C511.1 339.0 509.4 342.1 507.7 344.5C506.0 346.8 503.7 349.0 501.8 350.4C499.8 351.7 497.7 352.7 495.9 352.4C494.0 352.1 492.6 350.2 490.8 348.6C489.1 347.0 487.1 344.8 485.5 342.7C483.9 340.6 482.6 338.5 481.1 336.2C479.6 333.9 478.1 331.0 476.7 328.8C475.2 326.6 473.4 325.1 472.2 322.9C471.0 320.7 469.0 317.5 469.3 315.5Z" fill="#238c2e"/>
<path d="M489.1 315.5C489.6 313.5 491.5 312.3 492.9 312.5C494.3 312.8 495.9 315.5 497.3 317.0C498.8 318.4 500.5 319.4 501.8 321.4C503.0 323.4 504.0 326.3 504.7 328.8C505.5 331.3 506.7 334.0 506.2 336.2C505.7 338.4 503.5 341.0 501.8 342.1C500.0 343.2 497.6 343.3 495.9 342.7C494.1 342.1 492.6 340.4 491.4 338.5C490.3 336.7 489.3 334.1 489.1 331.7C488.8 329.4 490.0 327.1 490.0 324.4C490.0 321.7 488.6 317.5 489.1 315.5Z" fill="#738f40"/>
<path d="M465.7 288.3C466.2 287.5 468.4 286.9 469.3 287.4C470.1 287.9 470.9 290.0 470.7 291.3C470.6 292.5 469.1 294.6 468.4 294.8C467.6 295.0 466.7 293.5 466.3 292.4C465.9 291.4 465.2 289.1 465.7 288.3Z" fill="#238c2e"/>
<path d="M427.3 478.1C428.6 476.1 431.7 474.5 434.7 473.6C437.6 472.8 441.3 473.0 445.0 473.1C448.7 473.2 452.9 473.9 456.8 474.2C460.8 474.6 464.7 475.1 468.7 475.1C472.6 475.1 476.6 474.4 480.5 474.2C484.4 474.1 488.6 473.9 492.3 474.2C496.0 474.5 499.5 475.1 502.7 476.0C505.9 476.9 508.8 478.0 511.5 479.6C514.2 481.1 516.8 483.0 518.9 485.5C521.0 487.9 522.9 491.1 524.2 494.3C525.6 497.5 526.6 501.2 527.2 504.7C527.8 508.1 527.9 511.6 527.8 515.0C527.6 518.5 527.3 521.9 526.3 525.4C525.3 528.8 523.3 532.5 521.9 535.7C520.4 538.9 518.9 541.6 517.4 544.6C516.0 547.5 514.7 551.2 513.0 553.4C511.3 555.7 509.6 557.0 507.1 557.9C504.6 558.8 501.2 558.8 498.2 558.8C495.3 558.8 491.8 557.5 489.4 557.9C486.9 558.2 484.7 559.1 483.4 560.8C482.2 562.6 482.7 566.0 482.0 568.2C481.2 570.4 480.5 572.6 479.0 574.1C477.5 575.7 475.1 577.2 473.1 577.7C471.1 578.2 468.8 577.9 467.2 577.1C465.6 576.3 464.1 574.6 463.3 572.7C462.6 570.7 463.3 567.5 462.8 565.3C462.2 563.1 461.3 560.9 459.8 559.4C458.3 557.8 456.1 556.8 453.9 555.8C451.7 554.8 449.0 554.1 446.5 553.4C444.0 552.8 441.1 553.0 439.1 552.0C437.1 551.0 436.7 548.7 434.7 547.5C432.7 546.4 429.8 545.3 427.3 545.2C424.8 545.1 422.4 546.1 419.9 546.9C417.4 547.8 414.7 549.7 412.5 550.5C410.3 551.3 408.2 552.7 406.6 552.0C405.0 551.2 404.1 548.3 403.1 546.1C402.0 543.8 401.2 541.1 400.1 538.7C399.0 536.2 396.7 533.7 396.3 531.3C395.8 528.8 396.3 526.0 397.1 523.9C398.0 521.8 399.5 520.3 401.3 518.6C403.1 516.8 405.5 515.1 408.1 513.5C410.7 512.0 414.0 510.3 416.9 509.1C419.9 507.9 423.6 507.4 425.8 506.2C428.0 504.9 429.8 503.7 430.2 501.7C430.7 499.8 429.4 497.0 428.8 494.3C428.2 491.6 426.9 488.2 426.7 485.5C426.5 482.8 426.0 480.0 427.3 478.1Z" fill="#ecdfa0"/>
<path d="M437.6 481.0C439.4 479.2 443.3 479.2 446.5 479.0C449.7 478.7 453.2 479.2 456.8 479.6C460.5 479.9 464.7 481.0 468.7 481.0C472.6 481.0 476.6 479.8 480.5 479.6C484.4 479.3 488.9 479.2 492.3 479.6C495.8 480.0 498.5 480.8 501.2 481.9C503.9 483.0 506.2 484.2 508.6 486.1C510.9 487.9 513.4 490.2 515.4 492.9C517.3 495.5 519.3 498.5 520.4 501.7C521.5 504.9 521.9 508.6 521.9 512.1C521.9 515.5 521.3 519.0 520.4 522.4C519.5 525.9 517.9 529.6 516.6 532.8C515.2 536.0 514.0 538.9 512.4 541.6C510.8 544.3 509.2 547.3 507.1 549.0C505.0 550.7 502.4 551.6 499.7 552.0C497.0 552.3 493.4 551.3 490.8 551.1C488.2 550.8 485.9 549.9 484.0 550.5C482.2 551.1 480.7 553.0 479.9 554.9C479.1 556.9 479.5 560.1 479.0 562.3C478.5 564.5 478.1 566.7 476.9 568.2C475.8 569.7 473.6 571.4 472.2 571.2C470.8 570.9 469.4 568.7 468.7 566.7C468.0 564.8 468.5 561.8 468.1 559.4C467.7 556.9 467.7 553.7 466.3 552.0C464.9 550.2 462.1 549.8 459.8 549.0C457.5 548.3 454.9 548.0 452.4 547.5C450.0 547.0 447.2 546.9 445.0 546.1C442.8 545.2 441.0 543.7 439.1 542.2C437.2 540.7 435.2 539.0 433.8 537.2C432.4 535.4 431.0 533.5 430.8 531.3C430.6 529.1 432.0 526.4 432.6 523.9C433.3 521.4 434.2 519.2 434.7 516.5C435.2 513.8 435.2 510.6 435.6 507.6C435.9 504.7 436.7 501.7 436.7 498.8C436.8 495.8 436.0 492.9 436.2 489.9C436.3 486.9 435.9 482.9 437.6 481.0Z" fill="#238c2e"/>
<path d="M450.9 510.6C451.8 509.1 455.2 508.6 457.4 507.6C459.7 506.7 462.4 505.9 464.2 504.7C466.1 503.4 466.9 501.5 468.7 500.2C470.4 499.0 472.4 497.3 474.6 497.3C476.8 497.3 480.0 498.8 482.0 500.2C483.9 501.7 484.9 503.9 486.4 506.2C487.9 508.4 489.1 512.0 490.8 513.5C492.6 515.1 495.1 514.4 496.7 515.6C498.4 516.8 500.3 519.0 500.6 520.9C500.8 522.9 499.4 526.0 498.2 527.4C497.1 528.9 495.8 529.5 493.8 529.8C491.8 530.1 488.6 528.7 486.4 529.2C484.2 529.7 482.5 531.7 480.5 532.8C478.5 533.8 476.6 535.6 474.6 535.7C472.6 535.8 470.6 533.9 468.7 533.3C466.7 532.8 464.8 532.3 462.8 532.2C460.7 532.1 458.2 533.2 456.3 532.8C454.3 532.4 452.1 531.5 450.9 529.8C449.8 528.1 449.2 524.6 449.5 522.4C449.7 520.2 452.2 518.5 452.4 516.5C452.7 514.5 450.1 512.1 450.9 510.6Z" fill="#8c8c73"/>
<path d="M474.0 494.3C474.2 492.8 478.9 490.4 480.5 490.8C482.1 491.2 483.7 495.1 483.4 496.7C483.2 498.3 480.6 500.6 479.0 500.2C477.4 499.9 473.7 495.9 474.0 494.3Z" fill="#738f40"/>
<path d="M510.0 488.4C511.0 488.4 514.2 491.9 516.0 494.3C517.7 496.8 520.0 500.7 520.4 503.2C520.8 505.7 519.3 509.4 518.3 509.1C517.3 508.9 515.9 504.2 514.5 501.7C513.1 499.3 510.8 496.6 510.0 494.3C509.3 492.1 509.1 488.4 510.0 488.4Z" fill="#4d6b4d"/>
<path d="M434.7 532.8C435.7 531.7 439.1 531.2 440.6 532.2C442.1 533.2 443.8 537.1 443.5 538.7C443.3 540.2 440.6 541.6 439.1 541.6C437.6 541.6 435.4 540.1 434.7 538.7C433.9 537.2 433.7 533.8 434.7 532.8Z" fill="#4d6b4d"/>
<path d="M403.6 520.9C404.5 519.0 406.1 517.6 408.1 516.5C410.0 515.4 412.8 514.3 415.5 514.4C418.2 514.6 422.1 516.3 424.3 517.4C426.6 518.5 428.8 519.6 428.8 520.9C428.8 522.3 426.3 524.3 424.3 525.4C422.4 526.5 419.2 526.7 416.9 527.4C414.7 528.2 412.9 528.8 411.0 529.8C409.2 530.8 407.3 533.6 406.0 533.3C404.7 533.1 403.4 530.4 403.1 528.3C402.7 526.3 402.8 522.9 403.6 520.9Z" fill="#238c2e"/>
<path d="M688.3 641.0C689.5 640.2 694.0 640.0 695.3 641.0C696.6 642.1 696.1 645.0 696.2 647.2C696.2 649.3 695.6 652.1 695.6 654.1C695.6 656.2 695.6 657.9 696.2 659.4C696.7 660.8 698.3 661.6 698.8 662.9C699.3 664.2 699.4 665.9 699.1 667.2C698.8 668.6 698.1 670.0 697.0 670.7C696.0 671.5 694.2 672.0 692.7 672.0C691.1 672.0 689.3 671.5 687.9 670.7C686.6 670.0 685.4 668.6 684.8 667.2C684.2 665.9 684.2 664.2 684.5 662.9C684.7 661.6 686.1 661.1 686.6 659.4C687.0 657.6 687.2 654.6 687.4 652.4C687.7 650.2 687.8 648.2 687.9 646.3C688.1 644.4 687.1 641.9 688.3 641.0Z" fill="#ecdfa0"/>
<path d="M688.3 666.7C688.3 666.0 688.7 665.0 689.3 664.5C690.0 663.9 691.2 663.6 692.1 663.6C693.0 663.6 694.2 664.0 694.8 664.6C695.3 665.2 695.7 666.3 695.6 667.1C695.5 667.8 694.9 668.7 694.2 669.2C693.5 669.6 692.3 669.8 691.4 669.7C690.6 669.6 689.7 669.3 689.2 668.8C688.6 668.3 688.3 667.5 688.3 666.7Z" fill="#1a3380"/>
<path d="M706.6 645.8C706.9 645.6 709.1 648.2 710.1 649.8C711.1 651.3 712.3 653.3 712.8 655.0C713.2 656.8 713.3 658.7 713.1 660.3C712.9 661.9 711.9 664.6 711.4 664.6C710.8 664.6 710.0 661.9 709.6 660.3C709.3 658.7 709.5 656.6 709.3 655.0C709.1 653.4 708.8 652.2 708.4 650.7C707.9 649.1 706.3 645.9 706.6 645.8Z" fill="#ecdfa0"/>
<path d="M714.1 669.0C714.4 668.9 715.7 671.4 717.1 672.5C718.5 673.6 721.9 674.1 722.4 675.5C722.8 676.8 720.5 680.1 719.7 680.3C719.0 680.6 718.6 678.0 718.0 676.9C717.4 675.7 716.5 674.7 715.9 673.4C715.3 672.1 713.9 669.1 714.1 669.0Z" fill="#ecdfa0"/>
<path d="M703.1 695.2C703.8 693.9 705.2 693.4 706.1 693.4C707.0 693.5 708.4 694.8 708.4 695.7C708.4 696.6 706.8 697.6 706.1 698.7C705.4 699.8 705.0 701.7 704.4 702.2C703.7 702.6 702.5 702.5 702.3 701.3C702.1 700.1 702.5 696.5 703.1 695.2Z" fill="#ecdfa0"/>
<path d="M343.6 246.0C344.4 245.7 347.5 246.4 349.8 247.5C352.0 248.6 354.7 251.1 357.2 252.4C359.7 253.8 362.1 255.2 364.6 255.7C367.1 256.1 369.8 255.9 372.0 255.0C374.3 254.2 376.4 252.0 378.2 250.7C380.1 249.4 381.3 248.4 383.2 247.5C385.0 246.6 389.4 244.9 389.4 245.4C389.4 245.9 384.5 248.5 383.2 250.3C381.8 252.1 382.8 255.0 381.3 256.2C379.9 257.3 377.3 256.8 374.5 257.4C371.7 258.0 367.5 259.9 364.6 259.9C361.7 259.9 359.7 258.6 357.2 257.4C354.7 256.2 351.8 253.8 349.8 252.4C347.7 251.1 345.8 250.3 344.8 249.2C343.8 248.1 342.7 246.3 343.6 246.0Z" fill="#ecdfa0"/>
<path d="M347.3 247.5C347.4 247.3 351.2 250.2 353.5 251.6C355.7 253.0 358.8 255.0 360.9 255.9C363.0 256.8 365.9 257.0 365.9 257.1C365.9 257.3 363.1 257.4 360.9 256.6C358.7 255.9 355.1 254.0 352.9 252.4C350.6 250.9 347.2 247.6 347.3 247.5Z" fill="#238c2e"/>
<path d="M377.0 252.4C377.6 251.8 379.9 250.1 382.0 249.1C384.0 248.1 389.3 246.1 389.4 246.2C389.5 246.4 384.4 248.8 382.6 250.0C380.7 251.1 379.2 252.8 378.2 253.2C377.3 253.6 376.4 253.1 377.0 252.4Z" fill="#238c2e"/>
<path d="M337.4 255.9C337.5 254.0 338.3 251.4 338.9 250.3C339.4 249.3 340.1 248.0 340.8 249.7C341.6 251.5 343.1 257.9 343.6 260.9C344.1 263.8 344.2 266.5 343.8 267.7C343.4 268.8 342.3 268.7 341.3 267.7C340.4 266.6 339.0 263.4 338.4 261.5C337.7 259.5 337.3 257.8 337.4 255.9Z" fill="#ecdfa0"/>
<path d="M341.3 262.3C341.7 261.9 343.2 261.9 343.6 262.3C343.9 262.8 343.9 264.4 343.6 264.8C343.2 265.2 341.7 265.2 341.3 264.8C341.0 264.4 341.0 262.8 341.3 262.3Z" fill="#c9975a"/>
<path d="M762.3 280.2C763.1 278.2 764.8 276.7 766.7 275.9C768.6 275.0 771.6 275.3 773.6 275.0C775.6 274.7 777.2 274.0 778.8 274.1C780.4 274.3 781.8 275.0 783.2 275.9C784.5 276.7 785.8 277.6 786.6 279.3C787.5 281.1 787.6 284.4 788.4 286.3C789.1 288.2 790.3 289.2 791.0 290.6C791.6 292.1 792.3 293.4 792.3 294.9C792.3 296.5 791.6 298.4 791.0 300.2C790.3 301.9 789.1 303.5 788.4 305.4C787.6 307.2 787.5 309.7 786.6 311.4C785.8 313.2 784.6 314.7 783.2 315.8C781.7 316.8 779.7 317.3 777.9 317.5C776.2 317.6 774.5 317.1 772.7 316.6C771.0 316.2 769.3 315.5 767.5 314.9C765.8 314.3 763.9 314.0 762.3 313.2C760.8 312.3 759.2 311.3 758.0 309.7C756.8 308.1 755.9 305.8 755.4 303.6C754.9 301.5 754.5 298.7 755.0 296.7C755.4 294.7 756.8 292.9 758.0 291.5C759.2 290.0 761.6 289.9 762.3 288.0C763.1 286.1 761.6 282.2 762.3 280.2Z" fill="#ecdfa0"/>
<path d="M768.4 280.2C768.8 278.9 769.6 278.1 771.0 277.6C772.5 277.1 775.5 276.9 777.1 277.2C778.7 277.5 779.8 278.3 780.5 279.3C781.3 280.4 781.0 282.2 781.4 283.7C781.8 285.1 782.3 286.6 783.2 288.0C784.0 289.5 785.9 290.8 786.6 292.3C787.3 293.9 787.6 295.8 787.5 297.5C787.3 299.3 786.5 301.2 785.8 302.8C785.0 304.3 784.5 305.9 783.2 307.1C781.8 308.2 779.7 309.0 777.9 309.7C776.2 310.3 774.5 311.0 772.7 311.0C771.0 311.0 769.1 310.3 767.5 309.7C766.0 309.0 764.3 308.2 763.2 307.1C762.1 305.9 761.3 304.2 761.0 302.8C760.8 301.3 761.3 299.7 761.9 298.4C762.6 297.1 764.1 296.4 764.9 294.9C765.7 293.5 766.1 291.3 766.7 289.7C767.3 288.2 768.1 287.0 768.4 285.4C768.7 283.8 768.0 281.5 768.4 280.2Z" fill="#4d6b4d"/>
<path d="M771.9 281.9C772.5 280.4 773.5 279.3 774.5 278.9C775.5 278.5 777.1 279.0 777.9 279.8C778.8 280.6 779.2 282.2 779.7 283.7C780.1 285.2 780.0 287.3 780.5 288.9C781.1 290.5 782.6 291.6 783.2 293.2C783.7 294.8 784.2 296.8 784.0 298.4C783.9 300.0 783.0 301.7 782.3 302.8C781.6 303.8 780.7 304.8 779.7 304.9C778.7 305.1 777.1 304.4 776.2 303.6C775.3 302.8 775.5 300.8 774.5 300.2C773.5 299.5 771.4 299.4 770.1 299.7C768.8 300.0 767.5 301.8 766.7 301.9C765.8 302.0 764.9 301.0 764.9 300.2C764.9 299.3 765.9 297.8 766.7 296.7C767.5 295.5 769.1 294.7 769.7 293.2C770.4 291.8 770.2 289.9 770.6 288.0C770.9 286.1 771.2 283.5 771.9 281.9Z" fill="#238c2e"/>
<path d="M802.6 517.5C802.7 515.6 803.7 514.7 805.2 513.0C806.7 511.2 810.2 509.4 811.6 507.2C813.0 504.9 812.7 502.0 813.6 499.4C814.4 496.9 815.2 493.7 816.8 491.7C818.4 489.8 820.6 488.8 823.2 487.9C825.8 486.9 829.4 486.4 832.2 485.9C835.0 485.5 838.0 484.5 839.9 485.3C841.9 486.0 842.9 488.3 843.8 490.4C844.6 492.6 845.2 495.4 845.1 498.2C845.0 500.9 843.9 504.2 843.1 507.2C842.4 510.2 841.5 513.4 840.6 516.2C839.6 519.0 838.8 521.5 837.4 523.9C836.0 526.2 834.4 528.5 832.2 530.3C830.1 532.1 827.1 533.8 824.5 534.8C821.9 535.8 818.9 536.6 816.8 536.5C814.6 536.4 813.1 535.4 811.6 534.2C810.1 532.9 808.9 530.7 807.8 529.0C806.6 527.3 805.4 525.8 804.6 523.9C803.7 522.0 802.5 519.3 802.6 517.5Z" fill="#ecdfa0"/>
<path d="M807.8 516.2C808.3 514.7 809.9 513.4 811.6 512.3C813.3 511.2 816.8 511.2 818.1 509.7C819.3 508.2 819.1 505.6 819.3 503.3C819.6 501.1 818.7 498.0 819.3 496.2C820.0 494.4 821.3 493.3 823.2 492.4C825.1 491.4 828.6 490.7 830.9 490.4C833.3 490.2 835.9 490.2 837.4 491.1C838.9 491.9 839.6 493.3 839.9 495.6C840.3 497.8 839.7 501.6 839.3 504.6C838.9 507.6 838.3 510.6 837.4 513.6C836.4 516.6 835.0 520.2 833.5 522.6C832.0 525.0 830.3 526.5 828.4 527.7C826.4 529.0 824.1 529.8 821.9 530.3C819.8 530.9 817.3 531.6 815.5 531.0C813.7 530.3 812.2 528.1 811.0 526.5C809.8 524.8 808.9 523.0 808.4 521.3C807.9 519.6 807.2 517.7 807.8 516.2Z" fill="#4d6b4d"/>
<path d="M811.6 516.2C812.2 515.1 812.9 513.9 814.2 513.0C815.5 512.0 818.3 512.0 819.3 510.4C820.4 508.8 820.5 505.6 820.6 503.3C820.7 501.1 819.6 498.6 820.0 496.9C820.4 495.2 821.4 494.0 823.2 493.0C825.0 492.0 828.6 491.0 830.9 490.7C833.3 490.4 836.0 490.5 837.4 491.5C838.8 492.4 839.1 494.0 839.3 496.2C839.5 498.4 839.1 501.7 838.6 504.6C838.2 507.5 837.7 510.7 836.7 513.6C835.8 516.5 834.4 519.8 832.9 522.0C831.4 524.1 829.5 525.4 827.7 526.5C825.9 527.5 823.9 528.2 821.9 528.4C820.0 528.6 817.6 528.5 816.1 527.7C814.6 527.0 813.8 525.3 812.9 523.9C812.1 522.5 811.2 520.7 811.0 519.4C810.8 518.1 811.1 517.2 811.6 516.2Z" fill="#238c2e"/>
<path d="M828.4 496.2C829.3 495.5 831.5 495.0 832.2 496.2C833.0 497.4 833.0 500.6 832.9 503.3C832.7 506.0 832.3 509.5 831.6 512.3C830.8 515.1 829.5 518.1 828.4 520.0C827.2 522.0 825.6 523.5 824.5 523.9C823.4 524.3 822.3 523.9 821.9 522.6C821.5 521.3 821.6 518.5 821.9 516.2C822.2 513.8 823.1 511.0 823.9 508.4C824.6 505.9 825.7 502.8 826.4 500.7C827.2 498.7 827.4 497.0 828.4 496.2Z" fill="#738f40"/>
<path d="M717.1 513.6C716.9 510.6 718.0 507.6 719.0 504.6C720.0 501.6 721.1 498.4 722.9 495.6C724.6 492.8 726.7 489.8 729.3 487.9C731.9 485.9 735.5 484.5 738.3 484.0C741.1 483.5 744.1 483.4 746.0 484.6C748.0 485.9 748.4 489.5 749.9 491.7C751.4 494.0 753.5 495.8 755.0 498.2C756.5 500.5 757.7 503.1 758.9 505.9C760.1 508.7 762.0 512.1 762.1 514.9C762.2 517.7 760.5 520.2 759.5 522.6C758.6 525.0 757.1 526.5 756.3 529.0C755.6 531.6 755.3 535.0 755.0 538.0C754.7 541.0 754.8 544.5 754.4 547.0C754.0 549.6 753.6 552.0 752.5 553.5C751.3 554.9 749.2 555.8 747.3 555.8C745.4 555.8 743.0 554.7 740.9 553.5C738.7 552.2 736.4 550.5 734.4 548.3C732.5 546.2 730.9 543.4 729.3 540.6C727.7 537.8 726.3 534.6 724.8 531.6C723.3 528.6 721.6 525.6 720.3 522.6C719.0 519.6 717.3 516.6 717.1 513.6Z" fill="#ecdfa0"/>
<path d="M722.2 513.6C722.2 511.0 723.2 508.4 724.2 505.9C725.1 503.3 726.5 500.6 728.0 498.2C729.5 495.7 731.4 492.8 733.2 491.1C734.9 489.4 736.7 488.3 738.3 487.9C739.9 487.4 741.8 487.4 742.8 488.5C743.8 489.6 743.6 492.4 744.1 494.3C744.6 496.2 744.6 497.9 746.0 500.1C747.4 502.2 750.8 504.9 752.5 507.2C754.1 509.4 755.5 511.2 755.7 513.6C755.9 516.0 754.4 518.7 753.7 521.3C753.1 523.9 752.2 526.5 751.8 529.0C751.4 531.6 751.3 534.2 751.2 536.7C751.1 539.3 751.5 542.2 751.2 544.5C750.8 546.7 750.3 549.1 749.2 550.3C748.2 551.4 746.4 551.7 744.7 551.5C743.0 551.4 740.8 550.7 738.9 549.6C737.1 548.5 735.2 546.8 733.8 545.1C732.4 543.4 731.7 541.8 730.6 539.3C729.5 536.9 728.4 533.3 727.4 530.3C726.3 527.3 725.0 524.1 724.2 521.3C723.3 518.5 722.2 516.2 722.2 513.6Z" fill="#4d6b4d"/>
<path d="M722.9 513.6C722.8 511.0 723.8 508.4 724.8 505.9C725.8 503.3 727.2 500.6 728.7 498.2C730.2 495.8 732.1 493.1 733.8 491.5C735.5 489.9 737.1 488.9 738.6 488.5C740.0 488.1 741.6 488.2 742.4 489.2C743.3 490.1 743.1 492.4 743.7 494.3C744.3 496.2 744.3 498.3 745.8 500.5C747.2 502.7 750.7 505.2 752.2 507.4C753.7 509.6 754.9 511.3 755.0 513.6C755.2 515.9 753.9 518.7 753.2 521.3C752.6 523.9 751.6 526.5 751.2 529.0C750.7 531.6 750.6 534.3 750.4 536.7C750.2 539.2 750.5 541.9 750.1 543.8C749.8 545.8 749.3 547.6 748.3 548.6C747.4 549.5 745.9 549.8 744.5 549.6C743.0 549.4 741.1 548.4 739.6 547.3C738.0 546.2 736.5 544.7 735.2 542.9C733.9 541.2 732.9 539.0 731.9 536.7C730.8 534.5 730.1 532.2 729.0 529.7C728.0 527.1 726.5 524.0 725.4 521.3C724.4 518.6 723.0 516.2 722.9 513.6Z" fill="#238c2e"/>
<path d="M724.8 512.3C724.9 510.4 726.3 508.2 727.4 507.2C728.4 506.1 729.9 505.6 731.2 505.9C732.5 506.2 733.9 508.0 735.1 509.1C736.3 510.2 736.9 512.0 738.3 512.3C739.7 512.6 742.1 510.9 743.4 511.0C744.8 511.1 746.1 511.9 746.7 513.0C747.3 514.0 747.4 516.0 747.0 517.5C746.7 519.0 745.7 520.6 744.7 522.0C743.8 523.3 742.7 525.3 741.5 525.8C740.3 526.4 739.1 524.8 737.7 525.2C736.3 525.5 734.5 527.9 733.2 527.7C731.8 527.6 730.4 526.0 729.3 524.5C728.2 523.0 727.5 520.8 726.7 518.7C726.0 516.7 724.7 514.2 724.8 512.3Z" fill="#738f40"/>
<path d="M735.1 519.4C735.5 518.6 736.6 517.9 737.7 517.5C738.7 517.0 740.5 516.7 741.5 516.8C742.5 516.9 743.5 517.2 743.7 518.1C743.9 519.0 742.8 520.9 742.8 522.0C742.8 523.0 744.0 523.9 743.7 524.5C743.4 525.2 741.9 526.1 740.9 525.8C739.9 525.5 738.6 523.5 737.7 522.9C736.8 522.2 735.9 522.5 735.5 522.0C735.0 521.4 734.7 520.1 735.1 519.4Z" fill="#8c8c73"/>
<path d="M811.1 417.2C811.4 416.1 812.7 415.0 814.0 413.9C815.3 412.8 818.0 412.2 819.0 410.6C820.0 409.1 819.7 406.5 820.2 404.9C820.8 403.2 821.3 401.6 822.3 400.7C823.3 399.9 824.6 399.8 826.4 399.9C828.2 400.0 831.4 400.6 833.0 401.1C834.7 401.7 835.1 402.2 836.3 403.2C837.6 404.2 839.2 405.8 840.4 407.3C841.7 408.8 843.0 410.5 843.8 412.3C844.5 414.1 844.4 416.4 845.0 418.1C845.5 419.7 846.2 421.0 847.1 422.2C847.9 423.4 849.5 424.4 850.4 425.5C851.2 426.6 852.0 427.6 852.0 428.8C852.0 430.0 851.0 431.5 850.4 432.9C849.7 434.3 848.8 436.0 847.9 437.1C846.9 438.2 845.7 439.1 844.6 439.5C843.5 439.9 842.5 439.9 841.3 439.5C840.0 439.1 838.5 437.7 837.1 437.1C835.8 436.4 834.5 435.7 833.0 435.4C831.5 435.1 829.9 435.3 828.1 435.2C826.3 435.2 823.7 435.5 822.3 435.0C820.9 434.5 820.4 433.3 819.8 432.1C819.2 430.9 819.3 429.3 818.6 428.0C817.9 426.6 816.7 425.1 815.7 423.8C814.7 422.6 813.1 421.6 812.4 420.5C811.6 419.4 810.9 418.3 811.1 417.2Z" fill="#ecdfa0"/>
<path d="M821.9 409.8C821.9 407.7 822.4 406.6 823.1 405.7C823.9 404.7 824.9 404.3 826.4 404.0C827.9 403.8 830.7 403.9 832.2 404.2C833.7 404.5 834.5 404.9 835.5 405.7C836.5 406.5 837.3 407.7 838.0 409.0C838.7 410.2 839.1 411.6 839.6 413.1C840.2 414.6 840.7 416.6 841.3 418.1C841.8 419.6 842.1 421.0 842.9 422.2C843.8 423.4 845.3 424.4 846.2 425.5C847.2 426.6 848.6 427.6 848.7 428.8C848.8 430.0 847.7 431.7 847.1 432.9C846.4 434.2 845.4 435.6 844.6 436.2C843.8 436.8 843.2 436.9 842.1 436.6C841.0 436.4 839.3 435.2 838.0 434.6C836.6 434.0 835.4 433.1 833.8 432.9C832.3 432.7 830.5 433.3 828.9 433.3C827.2 433.4 825.2 433.8 823.9 433.3C822.7 432.9 821.8 431.9 821.5 430.4C821.1 429.0 821.7 426.7 821.9 424.7C822.1 422.6 822.7 420.5 822.7 418.1C822.7 415.6 821.8 411.9 821.9 409.8Z" fill="#4d6b4d"/>
<path d="M823.9 410.6C824.1 408.8 824.2 407.7 824.8 406.9C825.3 406.2 826.1 406.1 827.2 406.1C828.3 406.1 830.1 406.3 831.4 406.9C832.6 407.5 833.8 408.8 834.7 409.8C835.6 410.8 836.0 411.9 836.7 413.1C837.4 414.4 838.1 415.8 838.8 417.2C839.5 418.7 840.1 420.5 840.9 421.8C841.6 423.0 842.4 423.8 843.3 424.7C844.2 425.5 845.4 426.0 846.2 426.7C847.1 427.5 848.2 428.2 848.3 429.2C848.4 430.2 847.3 431.8 846.6 432.9C846.0 434.0 845.2 435.3 844.4 435.8C843.7 436.3 843.1 436.3 842.1 436.1C841.1 435.8 839.5 434.8 838.1 434.2C836.8 433.6 835.6 432.7 834.0 432.5C832.5 432.3 830.5 432.9 828.9 432.9C827.3 433.0 825.5 433.3 824.4 432.9C823.3 432.5 822.6 431.8 822.3 430.4C822.0 429.1 822.2 426.7 822.5 424.7C822.7 422.6 823.3 420.4 823.5 418.1C823.8 415.7 823.7 412.5 823.9 410.6Z" fill="#238c2e"/>
</g>
<g filter="url(#rg2)"><path d="M337.7 253.4C338.0 251.1 339.3 248.7 340.7 247.5C342.1 246.3 344.0 245.5 346.0 246.0C348.0 246.5 350.2 249.0 352.5 250.5C354.8 251.9 357.4 253.8 359.9 254.9C362.4 256.0 364.8 257.0 367.3 257.0C369.8 257.0 372.2 256.0 374.7 254.9C377.1 253.8 379.6 251.9 382.1 250.5C384.5 249.0 387.0 247.6 389.5 246.0C391.9 244.5 394.1 242.5 396.8 241.0C399.6 239.5 402.8 238.2 405.7 237.2C408.7 236.2 411.6 235.7 414.6 235.1C417.5 234.5 420.6 233.8 423.4 233.6C426.3 233.5 429.5 233.4 431.7 234.2C433.9 235.0 435.4 236.9 436.7 238.6C438.1 240.4 439.2 242.3 439.7 244.6C440.2 246.8 440.4 249.7 439.7 251.9C439.0 254.2 436.6 255.9 435.3 257.9C433.9 259.8 432.6 261.6 431.7 263.8C430.8 266.0 430.8 268.7 430.0 271.2C429.1 273.6 427.7 276.3 426.4 278.5C425.1 280.8 423.7 282.7 422.0 284.5C420.2 286.2 418.3 287.7 416.1 288.9C413.8 290.1 411.1 291.0 408.7 291.8C406.2 292.7 403.5 293.6 401.3 294.2C399.1 294.8 397.2 295.7 395.4 295.4C393.5 295.1 392.0 293.6 390.3 292.4C388.7 291.3 387.2 289.5 385.6 288.3C384.0 287.1 382.4 285.7 380.6 285.3C378.8 285.0 376.7 285.8 374.7 285.9C372.7 286.0 371.0 286.3 368.8 285.9C366.6 285.5 363.8 284.7 361.4 283.6C358.9 282.5 356.2 281.0 354.0 279.4C351.8 277.9 349.9 276.0 348.1 274.1C346.3 272.2 344.5 270.3 343.1 268.2C341.6 266.1 340.1 264.2 339.2 261.7C338.3 259.2 337.5 255.8 337.7 253.4Z" fill="none" stroke="#ecdfa0" stroke-width="2.0" stroke-linejoin="round"/><path d="M628.0 641.9C627.7 640.2 628.5 638.1 629.3 636.7C630.0 635.3 631.0 634.3 632.4 633.5C633.8 632.8 635.7 632.3 637.6 632.3C639.5 632.3 641.7 633.2 643.8 633.5C645.8 633.9 647.7 634.2 649.9 634.6C652.1 635.0 654.5 635.1 656.9 635.8C659.2 636.5 661.7 637.6 663.8 638.8C666.0 639.9 668.1 641.5 670.0 642.8C671.8 644.1 673.4 645.6 675.2 646.8C676.9 648.0 678.7 649.0 680.4 649.8C682.2 650.6 684.4 652.0 685.7 651.5C686.9 651.1 687.4 648.8 687.9 647.2C688.5 645.6 688.4 643.0 689.2 641.9C690.0 640.8 691.4 640.6 692.7 640.5C694.0 640.5 695.4 641.2 697.0 641.6C698.6 642.0 700.7 642.1 702.3 642.8C703.9 643.5 705.3 644.6 706.6 645.8C707.9 646.9 709.1 648.2 710.1 649.8C711.1 651.3 712.3 653.3 712.8 655.0C713.2 656.8 713.3 658.7 713.1 660.3C712.9 661.9 711.2 663.2 711.4 664.6C711.5 666.1 713.2 667.7 714.1 669.0C715.1 670.3 715.7 671.4 717.1 672.5C718.5 673.6 721.9 674.1 722.4 675.5C722.8 676.8 720.8 678.7 719.7 680.3C718.7 682.0 717.4 684.0 716.2 685.6C715.1 687.2 713.9 688.6 712.8 690.0C711.6 691.3 710.4 692.1 709.3 693.4C708.2 694.8 707.1 696.4 706.1 697.8C705.1 699.3 704.5 701.3 703.1 702.2C701.8 703.1 699.8 703.0 697.9 703.4C696.0 703.8 693.8 703.9 691.8 704.5C689.8 705.0 687.6 706.1 685.7 706.6C683.8 707.0 682.3 707.2 680.4 706.9C678.5 706.6 676.4 705.4 674.3 704.8C672.3 704.2 670.4 703.6 668.2 703.1C666.0 702.5 663.3 702.4 661.2 701.7C659.2 700.9 657.6 699.9 656.0 698.7C654.4 697.5 652.9 695.9 651.6 694.3C650.3 692.8 648.6 691.0 648.1 689.4C647.7 687.8 648.5 686.2 649.0 684.7C649.5 683.2 650.8 682.0 651.3 680.3C651.8 678.7 652.1 676.9 652.0 675.1C651.8 673.4 650.9 671.6 650.2 669.9C649.5 668.2 648.7 666.6 647.8 665.0C646.8 663.4 645.9 661.9 644.6 660.3C643.4 658.6 641.7 656.6 640.3 655.0C638.8 653.4 637.4 652.0 635.9 650.7C634.4 649.3 632.8 648.3 631.5 646.8C630.2 645.4 628.4 643.6 628.0 641.9Z" fill="none" stroke="#ecdfa0" stroke-width="1.8" stroke-linejoin="round"/><path d="M673.5 136.1C673.5 135.2 673.5 134.6 675.3 134.4C677.0 134.1 680.4 134.1 683.9 134.4C687.4 134.6 691.4 135.5 696.3 136.1C701.3 136.7 708.3 137.5 713.6 137.8C719.0 138.1 724.8 137.3 728.5 137.8C732.1 138.4 734.1 139.7 735.4 141.0C736.7 142.4 736.9 143.7 736.4 146.0C735.9 148.3 734.5 151.6 732.2 154.6C729.8 157.7 725.0 161.4 722.3 164.5C719.6 167.6 718.0 170.5 716.1 173.2C714.2 175.9 712.5 178.4 711.1 180.6C709.8 182.9 709.2 185.6 708.2 186.8C707.1 188.0 706.0 188.1 705.0 188.0C703.9 188.0 702.7 187.8 701.7 186.3C700.8 184.9 700.2 181.8 699.3 179.4C698.4 177.0 697.4 174.6 696.3 172.0C695.2 169.3 694.0 166.4 692.6 163.3C691.1 160.2 689.5 156.7 687.6 153.4C685.8 150.1 683.5 145.8 681.5 143.5C679.4 141.2 676.6 141.0 675.3 139.8C673.9 138.6 673.5 137.0 673.5 136.1Z" fill="none" stroke="#ecdfa0" stroke-width="1.9" stroke-linejoin="round"/></g>
<g shape-rendering="crispEdges">
<circle cx="604.500" cy="449.500" r="4.600" fill="#7b7b8f" opacity="0.75" shape-rendering="auto"/>
<rect x="601" y="446" width="7" height="7" rx="1" fill="#2a2a30"/>
<rect x="602" y="447" width="5" height="5" fill="#6f7d86"/>
<rect x="604" y="447" width="1.400" height="5" fill="#dc143c"/><rect x="602" y="449" width="5" height="1.400" fill="#dc143c"/>
<rect x="671" y="257" width="5" height="5" rx="0.800" fill="#0a0a0a"/><path d="M673.500 257.500l2 2-2 2-2-2z" fill="#ff00ff" shape-rendering="auto"/>
<rect x="452" y="481" width="5" height="5" rx="0.800" fill="#0a0a0a"/><path d="M454.500 481.500l2 2-2 2-2-2z" fill="#ff00ff" shape-rendering="auto"/>
<rect x="525" y="408" width="4" height="4" fill="#0a0a0a"/><rect x="525" y="409" width="3" height="3" fill="#f5a030"/>
<g fill="#f2e600"><rect x="499.500" y="333.500" width="1.500" height="2"/><rect x="576.500" y="398.500" width="1.300" height="3"/><rect x="583.300" y="476.500" width="1.300" height="2.500"/><rect x="715.500" y="289" width="1.500" height="2"/><rect x="613.800" y="273.800" width="1.500" height="1.500"/><rect x="599.300" y="226.600" width="1.500" height="1.500"/><rect x="491.500" y="532.500" width="2" height="1"/></g>
<rect x="593.800" y="413.300" width="2" height="2" fill="#f5c04a"/>
<rect x="599" y="492.200" width="2.400" height="1" fill="#30e0e0"/>
<g fill="#7a3028"><rect x="627" y="408.800" width="1.300" height="1.300"/><rect x="627" y="468" width="1.300" height="1.300"/></g>
<g fill="#7f7fa0"><rect x="563.500" y="438.800" width="1.600" height="1.300"/><rect x="635.500" y="438.800" width="1.600" height="1.300"/><rect x="607.300" y="385.500" width="1.300" height="1.300" fill="#b09aa8"/></g>
<path d="M438.500 526.800l1.500 1.500-1.500 1.500-1.500-1.500z" fill="#e020d0" shape-rendering="auto"/><rect x="498.500" y="510.500" width="1.500" height="1.500" fill="#8a7fa0"/><rect x="396.500" y="530" width="1.500" height="1.300" fill="#c08a50"/><rect x="678.500" y="222.800" width="1.800" height="1.500" fill="#d9a58c"/><rect x="692.800" y="286.800" width="1.300" height="1.500" fill="#7a3028"/>
<path d="M815.800 519.600l1.500 1.500-1.500 1.500-1.500-1.500z" fill="#e020d0" shape-rendering="auto"/><rect x="737.800" y="487.500" width="1.800" height="1.600" fill="#c08a50"/>
<rect x="830" y="421.300" width="2.500" height="1" fill="#ecdfa0"/><rect x="837" y="429.300" width="2.500" height="1.800" fill="#8c8c73"/><rect x="835" y="430.800" width="1.800" height="1.300" fill="#4a90e0"/>
</g>

</svg>
<!--/MAP-->
</div>
<div id="panel">
<!--PANEL-->
<div class="l" style="left:10.18px;top:9.5px;letter-spacing:0.19px">Cell (513, 579) - Island 0 (Main)</div>
<div class="l" style="left:9.65px;top:57.0px;letter-spacing:0.87px">Height:</div>
<div class="l" style="left:80.54px;top:57.0px;letter-spacing:0.10px">0.616</div>
<div class="l" style="left:10.27px;top:80.0px;letter-spacing:0.30px">Slope:</div>
<div class="l" style="left:76.61px;top:80.0px;letter-spacing:0.32px">0.113</div>
<div class="l" style="left:9.84px;top:103.0px;letter-spacing:0.94px">Moisture:</div>
<div class="l" style="left:89.10px;top:103.0px;letter-spacing:0.18px">0.529</div>
<div class="l" style="left:10.72px;top:126.0px;letter-spacing:0.93px">Temperature:</div>
<div class="l" style="left:106.59px;top:126.0px;letter-spacing:0.01px">0.664</div>
<div class="l" style="left:9.76px;top:149.0px;letter-spacing:0.53px">Exposure:</div>
<div class="l" style="left:91.29px;top:149.0px;letter-spacing:-0.23px">0.151</div>
<div class="l" style="left:9.95px;top:195.5px;letter-spacing:0.81px">Biome:</div>
<div class="l" style="left:83.10px;top:195.5px;letter-spacing:0.40px">Facility</div>
<div class="l" style="left:10.64px;top:218.5px;letter-spacing:0.48px">Tile:</div>
<div class="l" style="left:67.02px;top:218.5px;letter-spacing:0.64px">MetalFloor</div>
<div class="l" style="left:9.95px;top:265.5px;letter-spacing:0.43px">Dist to Coast:</div>
<div class="l" style="left:107.23px;top:265.5px;letter-spacing:0.13px">50.0</div>
<div class="l" style="left:9.95px;top:288.5px;letter-spacing:0.59px">Dist to Center:</div>
<div class="l" style="left:110.73px;top:288.5px;letter-spacing:0.07px">21.4</div>
<div class="l" style="left:10.82px;top:335.5px;letter-spacing:0.79px">Water:</div>
<div class="l" style="left:10.69px;top:358.5px;letter-spacing:0.34px">Water Access:</div>
<div class="l" style="left:107.24px;top:358.5px;letter-spacing:0.05px">0.00</div>
<div class="l" style="left:9.89px;top:405.5px;letter-spacing:0.46px">Food:</div>
<div class="l" style="left:72.60px;top:405.5px;letter-spacing:0.21px">0.073</div>
<div class="l" style="left:9.71px;top:428.5px;letter-spacing:0.74px">Medicinal:</div>
<div class="l" style="left:86.94px;top:428.5px;letter-spacing:0.02px">0.029</div>
<div class="l" style="left:10.69px;top:451.5px;letter-spacing:0.70px">Wood:</div>
<div class="l" style="left:78.60px;top:451.5px;letter-spacing:0.11px">0.025</div>
<div class="l" style="left:10.26px;top:474.5px;letter-spacing:0.53px">Stone:</div>
<div class="l" style="left:74.64px;top:474.5px;letter-spacing:0.37px">0.110</div>
<div class="l" style="left:9.76px;top:521.5px;letter-spacing:0.60px">Danger:</div>
<div class="l" style="left:81.66px;top:521.5px;letter-spacing:0.01px">0.185</div>
<div class="l" style="left:17.62px;top:544.5px;letter-spacing:0.75px">Predator:</div>
<div class="l" style="left:85.19px;top:544.5px;letter-spacing:0.02px">0.109</div>
<div class="l" style="left:17.54px;top:567.5px;letter-spacing:0.17px">Disease:</div>
<div class="l" style="left:80.64px;top:567.5px;letter-spacing:0.14px">0.184</div>
<div class="l" style="left:17.54px;top:590.5px;letter-spacing:0.11px">Env Hzd:</div>
<div class="l" style="left:82.80px;top:590.5px;letter-spacing:-0.02px">0.000</div>
<div class="l" style="left:17.93px;top:613.5px;letter-spacing:0.72px">Anomaly:</div>
<div class="l" style="left:88.60px;top:613.5px;letter-spacing:-0.05px">0.732</div>
<div class="l" style="left:10.35px;top:636.5px;letter-spacing:0.49px">Geothermal:</div>
<div class="l" style="left:98.60px;top:636.5px;letter-spacing:-0.03px">0.000</div>
<div class="hr" style="top:44.5px"></div>
<div class="hr" style="top:184.0px"></div>
<div class="hr" style="top:254.0px"></div>
<div class="hr" style="top:324.0px"></div>
<div class="hr" style="top:394.0px"></div>
<div class="hr" style="top:510.0px"></div>
<!--/PANEL-->
</div>
</div>
</div>
</body></html>
